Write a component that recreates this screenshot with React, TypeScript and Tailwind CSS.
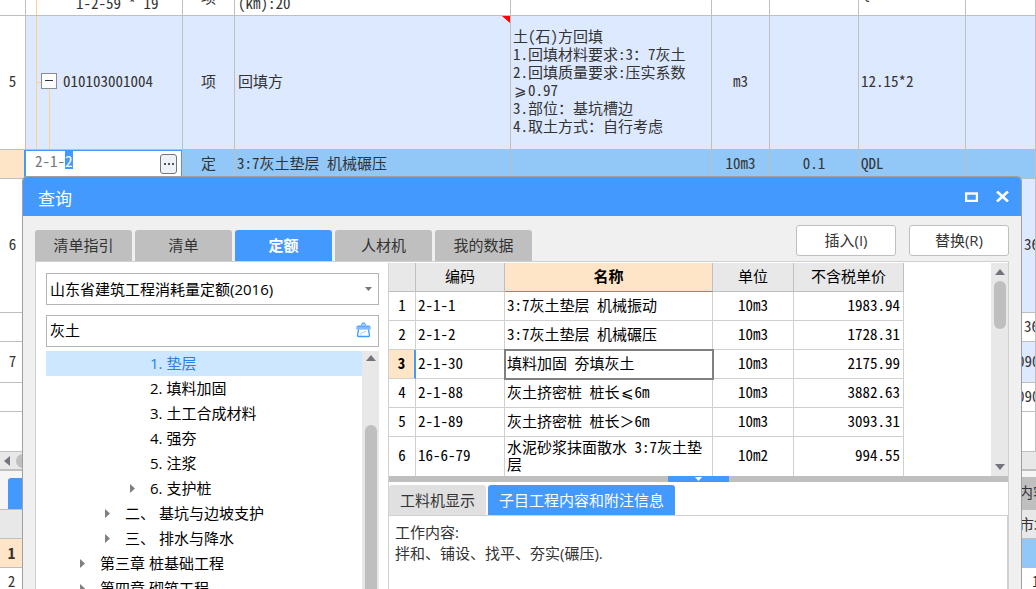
import { useEffect, useRef } from "react";

const costRows = [
  {
    no: "6",
    height: "h-[134px]",
    tone: "bg-[#dde9fe]",
    pad: "pl-[58px]",
    total: "36.45",
  },
  {
    no: "",
    height: "h-[29px]",
    tone: "bg-white",
    pad: "pl-[58px]",
    total: "36.45",
  },
  {
    no: "7",
    height: "h-[41px]",
    tone: "bg-[#dde9fe]",
    pad: "pl-[51px]",
    total: "090.2",
  },
  {
    no: "",
    height: "h-[29px]",
    tone: "bg-white",
    pad: "pl-[51px]",
    total: "090.2",
  },
  {
    no: "",
    height: "h-[40px]",
    tone: "bg-white",
    pad: "pl-[51px]",
    total: "",
  },
];

const tabs = ["清单指引", "清单", "定额", "人材机", "我的数据"];

const tree = [
  { no: "1.", label: "垫层", indent: "pl-[84px]", open: false, active: true },
  { no: "2.", label: "填料加固", indent: "pl-[84px]", open: false },
  { no: "3.", label: "土工合成材料", indent: "pl-[84px]", open: false },
  { no: "4.", label: "强夯", indent: "pl-[84px]", open: false },
  { no: "5.", label: "注浆", indent: "pl-[84px]", open: false },
  { no: "6.", label: "支护桩", indent: "pl-[84px]", open: true },
  { no: "二、", label: "基坑与边坡支护", indent: "pl-[59px]", open: true },
  { no: "三、", label: "排水与降水", indent: "pl-[59px]", open: true },
  { no: "第三章", label: "桩基础工程", indent: "pl-[34px]", open: true },
  { no: "第四章", label: "砌筑工程", indent: "pl-[34px]", open: true },
];

const quotas = [
  { code: "2-1-1", name: "3:7灰土垫层 机械振动", unit: "10m3", price: "1983.94" },
  { code: "2-1-2", name: "3:7灰土垫层 机械碾压", unit: "10m3", price: "1728.31" },
  { code: "2-1-30", name: "填料加固 夯填灰土", unit: "10m3", price: "2175.99" },
  { code: "2-1-88", name: "灰土挤密桩 桩长⩽6m", unit: "10m3", price: "3882.63" },
  { code: "2-1-89", name: "灰土挤密桩 桩长＞6m", unit: "10m3", price: "3093.31" },
  { code: "16-6-79", name: "水泥砂浆抹面散水 3:7灰土垫层", unit: "10m2", price: "994.55" },
];

// comparison signs take a full cell, the rest of the latin text half of one
function GridText({ text }: { text: string }) {
  return text.split(/([⩽⩾＞])/).map((part, index) =>
    index % 2 ? (
      <span
        key={index}
        className="inline-block w-[15px] text-center [font-feature-settings:normal]"
      >
        {part}
      </span>
    ) : (
      part
    ),
  );
}

function Arrow({ dir }: { dir: "up" | "down" | "left" | "right" }) {
  const points = {
    up: "0,6 5,0 10,6",
    down: "0,0 10,0 5,6",
    left: "6,0 6,10 0,5",
    right: "0,0 0,10 6,5",
  };
  const wide = dir === "up" || dir === "down";
  return (
    <svg
      width={wide ? 10 : 6}
      height={wide ? 6 : 10}
      className="shrink-0 fill-[#73737b]"
    >
      <polygon points={points[dir]} />
    </svg>
  );
}

function CodeEditor() {
  const ref = useRef<HTMLInputElement>(null);

  useEffect(() => {
    ref.current?.focus();
    ref.current?.setSelectionRange(4, 5);
  }, []);

  return (
    <div className="-ml-0.5 flex h-7 items-center border border-l-2 border-[#4499ff] bg-white pr-1">
      <input
        ref={ref}
        aria-label="编码"
        defaultValue="2-1-2"
        className="mb-2 h-[18px] min-w-0 flex-1 pl-[9px] text-[#777] outline-none selection:bg-[#4499ff] selection:text-white"
      />
      <button
        aria-label="更多"
        className="flex h-5 w-[17px] items-center justify-center gap-0.5 rounded-[3px] border border-[#777] bg-[#f0f2fa]"
      >
        <i className="size-0.5 bg-[#555]"></i>
        <i className="size-0.5 bg-[#555]"></i>
        <i className="size-0.5 bg-[#555]"></i>
      </button>
    </div>
  );
}

function CostTable() {
  return (
    <table className="w-full table-fixed border-separate border-spacing-0 leading-[17px] [&_td]:overflow-hidden [&_td]:border-r [&_td]:border-b [&_td]:border-[#bfbfbf] [&_td]:p-0 [&_td]:pb-1 [&_td]:whitespace-nowrap">
      <colgroup>
        <col className="w-[26px]" />
        <col className="w-[157px]" />
        <col className="w-[52px]" />
        <col className="w-[276px]" />
        <col className="w-[201px]" />
        <col className="w-[58px]" />
        <col className="w-[89px]" />
        <col className="w-[107px]" />
        <col />
      </colgroup>
      <tbody>
        <tr className="*:pb-0!">
          <td></td>
          <td className="relative">
            <i className="absolute top-0 left-2.5 h-full w-px bg-[#ffcf8c]"></i>
            <div className="flex h-[15px] items-end overflow-hidden pb-1 pl-[50px]">
              1-2-59 * 19
            </div>
          </td>
          <td>
            <div className="flex h-[15px] items-end justify-center overflow-hidden pb-2.5">
              项
            </div>
          </td>
          <td>
            <div className="flex h-[15px] items-end overflow-hidden pb-1 pl-[3px]">
              (km):20
            </div>
          </td>
          <td></td>
          <td></td>
          <td></td>
          <td>
            <div className="flex h-[15px] items-end overflow-hidden pb-3.5 pl-[3px]">
              QDL
            </div>
          </td>
          <td></td>
        </tr>
        <tr className="h-[134px] bg-[#dde9fe]">
          <td className="bg-white text-center">5</td>
          <td className="relative">
            <i className="absolute top-0 left-2.5 h-full w-px bg-[#ffcf8c]"></i>
            <i className="absolute top-[66px] left-2.5 h-px w-[5px] bg-[#ffcf8c]"></i>
            <i className="absolute top-[74px] bottom-0 left-[23px] w-px bg-[#ffcf8c]"></i>
            <div className="flex items-center gap-1.5 pl-[15px]">
              <button
                aria-label="折叠"
                className="flex size-4 items-center justify-center border border-[#8c8c8c] bg-white"
              >
                <i className="h-px w-2 bg-[#333]"></i>
              </button>
              <span>010103001004</span>
            </div>
          </td>
          <td className="text-center">项</td>
          <td className="relative">
            <svg
              width="8"
              height="7"
              className="absolute top-0 right-0 fill-[#ff0000]"
            >
              <polygon points="0,0 8,0 8,7" />
            </svg>
            <p className="pl-[3px]">回填方</p>
          </td>
          <td>
            <p className="pl-0.5 leading-[18px]">
              土(石)方回填
              <br />
              1.回填材料要求:3：7灰土
              <br />
              2.回填质量要求:压实系数
              <br />
              <GridText text="⩾0.97" />
              <br />
              3.部位：基坑槽边
              <br />
              4.取土方式：自行考虑
            </p>
          </td>
          <td className="text-center">m3</td>
          <td></td>
          <td>
            <p className="pl-0.5">12.15*2</p>
          </td>
          <td></td>
        </tr>
        <tr className="h-[29px] bg-[#91c8f7]">
          <td className="bg-[#ffe5c8]"></td>
          <td className="overflow-visible! pb-0! align-top">
            <CodeEditor />
          </td>
          <td className="text-center">定</td>
          <td>
            <p className="pl-0.5">3:7灰土垫层 机械碾压</p>
          </td>
          <td></td>
          <td className="text-center">10m3</td>
          <td className="text-center">0.1</td>
          <td>
            <p className="pl-0.5">QDL</p>
          </td>
          <td></td>
        </tr>
        {costRows.map((row, index) => (
          <tr key={index} className={`${row.height} ${row.tone}`}>
            <td className="bg-white text-center">{row.no}</td>
            <td colSpan={7}></td>
            <td>
              <p className={row.pad}>{row.total}</p>
            </td>
          </tr>
        ))}
      </tbody>
    </table>
  );
}

function DetailArea() {
  return (
    <section>
      <div className="flex h-[19px] items-center gap-1.5 border-b-2 border-[#bfbfbf] bg-[#e8e8e8] pl-1">
        <Arrow dir="left" />
        <i className="h-3.5 flex-1 rounded-full bg-[#bfbfbf]"></i>
        <i className="w-6"></i>
      </div>
      <div className="flex h-[39px] items-end justify-between border-b border-[#bfbfbf] bg-[#f5f5f5] pl-2">
        <button
          aria-label="工料机"
          className="h-[31px] w-24 rounded-t-[3px] bg-[#4499ff]"
        ></button>
        <div className="h-8 w-[18px] overflow-hidden bg-[#bfbfbf] pt-1 whitespace-nowrap">
          内容
        </div>
      </div>
      <div className="flex h-[29px] items-center justify-end border-b border-[#bfbfbf] bg-[#e8e8e8]">
        <p className="w-[17px] overflow-hidden whitespace-nowrap">市场价</p>
      </div>
      <div className="flex h-[29px] border-b border-[#bfbfbf] bg-[#91c8f7]">
        <b className="w-[23px] bg-[#ffe5c8] text-center leading-[27px]">1</b>
      </div>
      <div className="flex h-[29px] justify-between border-b border-[#bfbfbf] leading-[25px]">
        <p className="w-[23px] text-center">2</p>
        <p className="w-1 overflow-hidden">1</p>
      </div>
    </section>
  );
}

function QuotaTree() {
  return (
    <aside className="flex w-[343px] shrink-0 flex-col pt-2.5 pl-2.5">
      <div className="relative">
        <select
          aria-label="定额库"
          className="h-8 w-full appearance-none border border-[#b4b4b4] bg-white pl-[3px] outline-none"
        >
          <option>山东省建筑工程消耗量定额(2016)</option>
        </select>
        <svg
          width="7"
          height="4"
          className="pointer-events-none absolute top-3.5 right-[7px] fill-[#777]"
        >
          <polygon points="0,0 7,0 3.5,4" />
        </svg>
      </div>
      <div className="relative mt-2.5">
        <input
          aria-label="查找"
          defaultValue="灰土"
          className="h-8 w-full border border-[#b4b4b4] bg-white pb-1 pl-[3px] outline-none"
        />
        <button aria-label="清空" className="absolute top-[7px] right-2">
          <svg width="15" height="16" viewBox="0 0 15 16" fill="none">
            <path d="M5.5 3.5C5.5 1.5 6.5.8 7.5.8s2 .7 2 2.7" fill="#a9d0ff" stroke="#4499ff" />
            <path d="M2 3.5h11q1.5 0 1.5 1.5v2.5H.5V5Q.5 3.5 2 3.5z" fill="#5ba6ff" />
            <path d="M1 6h13" stroke="#a9d0ff" />
            <path
              d="M2.5 7.5 1.5 13.5q0 1 1 1h10q1 0 1-1l-1-6"
              stroke="#4499ff"
              strokeWidth="1.4"
            />
            <path d="M5 14v-3l5-1.5" stroke="#a9d0ff" />
          </svg>
        </button>
      </div>
      <div className="mt-1 flex min-h-0 flex-1 overflow-hidden">
        <ul className="flex-1">
          {tree.map((node) => (
            <li
              key={node.no}
              className={`flex h-[25px] items-center ${node.indent} ${
                node.active ? "bg-[#cce7ff] text-[#2a7fe8]" : ""
              }`}
            >
              <span className="w-5">
                {node.open && (
                  <svg width="5" height="9" className="fill-[#808080]">
                    <polygon points="0,0 5,4.5 0,9" />
                  </svg>
                )}
              </span>
              <span className="whitespace-pre">
                {node.no} {node.label}
              </span>
            </li>
          ))}
        </ul>
        <div className="flex w-[17px] flex-col items-center bg-[#e8e8e8] pt-1">
          <Arrow dir="up" />
          <i className="mt-16 w-3 flex-1 rounded-t-full bg-[#bfbfbf]"></i>
        </div>
      </div>
    </aside>
  );
}

function QuotaTable() {
  return (
    <div className="flex h-[213px] justify-between overflow-hidden">
      <table className="w-[515px] table-fixed border-separate border-spacing-0 self-start font-[Noto_Sans_CJK_SC,sans-serif] leading-[17px] [font-feature-settings:'hwid'] [&_td]:border-r [&_td]:border-b [&_td]:border-[#d0d0d0] [&_td]:p-0 [&_td]:pb-1 [&_th]:border-r [&_th]:border-b [&_th]:border-[#bfbfbf] [&_th]:p-0 [&_th]:pb-1">
        <thead>
          <tr className="h-[29px] bg-[#e8e8e8]">
            <th className="w-[27px]"></th>
            <th className="w-[89px] font-normal">编码</th>
            <th className="w-[208px] border-b-[#4499ff]! bg-[#ffe5c8] font-bold">
              名称
            </th>
            <th className="w-[81px] font-normal">单位</th>
            <th className="w-[110px] font-normal">不含税单价</th>
          </tr>
        </thead>
        <tbody>
          {quotas.map((quota, index) => {
            const picked = index === 2;
            return (
              <tr
                key={quota.code}
                className={index === 5 ? "h-10" : "h-[29px]"}
              >
                <td
                  className={`text-center ${
                    picked
                      ? "border-r-2! border-r-[#4499ff]! bg-[#ffe5c8] font-bold"
                      : ""
                  }`}
                >
                  {index + 1}
                </td>
                <td>
                  <p className="pl-0.5">{quota.code}</p>
                </td>
                <td
                  className={
                    picked ? "outline-2 -outline-offset-1 outline-[#808080]" : ""
                  }
                >
                  <p className="pl-0.5">
                    <GridText text={quota.name} />
                  </p>
                </td>
                <td className="text-center">{quota.unit}</td>
                <td className="text-right">
                  <p className="pr-[3px]">{quota.price}</p>
                </td>
              </tr>
            );
          })}
        </tbody>
      </table>
      <div className="flex w-[17px] flex-col items-center bg-[#e8e8e8] pt-1.5 pb-1.5">
        <Arrow dir="up" />
        <i className="mt-1.5 h-12 w-3 rounded-full bg-[#bfbfbf]"></i>
        <i className="flex-1"></i>
        <Arrow dir="down" />
      </div>
    </div>
  );
}

function QueryDialog() {
  return (
    <section
      role="dialog"
      aria-labelledby="query-title"
      className="absolute top-[176px] right-3.5 bottom-0 left-[22px] flex flex-col overflow-hidden rounded-t-[5px] border border-b-0 border-[#a0a0a0] bg-[#f0f0f0] font-[Open_Sans,Noto_Sans_CJK_SC,sans-serif] text-black [font-feature-settings:normal]"
    >
      <header className="flex h-[39px] shrink-0 items-center justify-between bg-[#4499ff] pr-3 pl-[15px] text-white">
        <h1 id="query-title" className="pt-1 text-[17px]">
          查询
        </h1>
        <div className="flex items-center gap-[18px]">
          <button aria-label="最大化">
            <svg width="13" height="10" fill="none" stroke="#fff">
              <rect x="1" y="1.5" width="11" height="7.5" strokeWidth="2.4" />
            </svg>
          </button>
          <button aria-label="关闭">
            <svg width="13" height="11" stroke="#fff" strokeWidth="2.6">
              <path d="M1 .5 12 10.5M12 .5 1 10.5" />
            </svg>
          </button>
        </div>
      </header>

      <nav className="flex h-[45px] shrink-0 items-end justify-between px-3">
        <div className="flex gap-[3px]">
          {tabs.map((tab) => (
            <button
              key={tab}
              className={`h-[31px] w-[97px] rounded-t-[3px] ${
                tab === "定额"
                  ? "bg-[#4499ff] font-bold text-white"
                  : "bg-[#bfbfbf] text-[#333]"
              }`}
            >
              {tab}
            </button>
          ))}
        </div>
        <div className="flex gap-[13px] pb-[5px] text-[#333]">
          <button className="h-[31px] w-[100px] rounded-[3px] border border-[#bfbfbf] bg-white">
            插入(I)
          </button>
          <button className="h-[31px] w-[100px] rounded-[3px] border border-[#bfbfbf] bg-white">
            替换(R)
          </button>
        </div>
      </nav>

      <main className="mx-3 flex min-h-0 flex-1 border border-b-0 border-[#d0d0d0] bg-white pt-px">
        <QuotaTree />
        <div className="ml-[9px] flex min-w-0 flex-1 flex-col border-l border-[#d0d0d0]">
          <QuotaTable />
          <div className="flex h-1.5 shrink-0 justify-center bg-[#bfbfbf]">
            <button
              aria-label="收起"
              className="flex w-[61px] items-center justify-center bg-[#4499ff]"
            >
              <svg width="7" height="4" className="fill-white">
                <polygon points="0,0 7,0 3.5,4" />
              </svg>
            </button>
          </div>
          <div className="mt-[3px] flex gap-0.5">
            <button className="h-[30px] w-[97px] rounded-t-[3px] bg-[#e0e0e0] text-[#333]">
              工料机显示
            </button>
            <button className="h-[30px] w-[187px] rounded-t-[3px] bg-[#4499ff] text-white">
              子目工程内容和附注信息
            </button>
          </div>
          <div className="flex-1 border-t border-r border-[#d0d0d0] px-1.5 pt-1.5 leading-[21px] text-[#333]">
            <p>工作内容:</p>
            <p>拌和、铺设、找平、夯实(碾压).</p>
          </div>
        </div>
      </main>
    </section>
  );
}

export default function App() {
  return (
    <div className="relative h-screen overflow-hidden bg-white font-[Noto_Sans_CJK_SC,sans-serif] text-[15px] text-[#333] [font-feature-settings:'hwid']">
      <CostTable />
      <DetailArea />
      <QueryDialog />
    </div>
  );
}
